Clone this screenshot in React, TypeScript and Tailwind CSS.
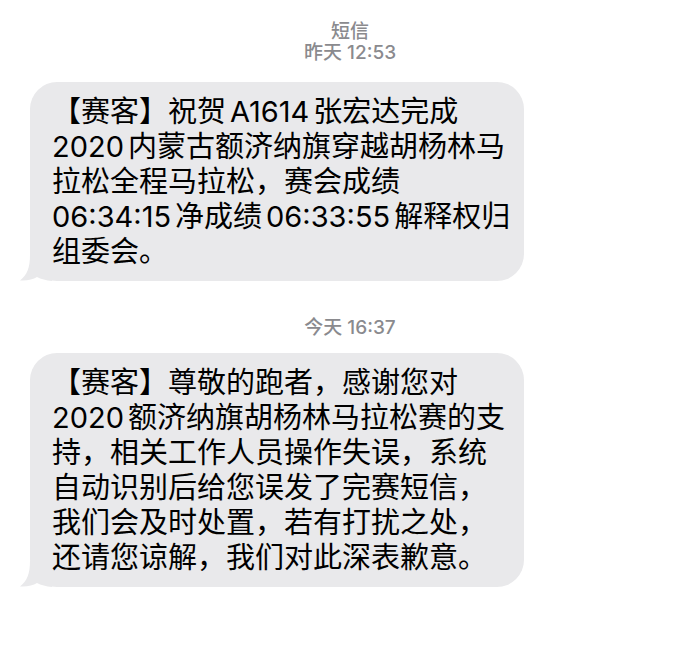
import React from "react";

const FONT = "font-['Inter','Noto_Sans_CJK_SC',sans-serif]";

const first = [
    "【赛客】祝贺 A1614 张宏达完成",
    "2020 内蒙古额济纳旗穿越胡杨林马",
    "拉松全程马拉松，赛会成绩",
    "06:34:15 净成绩 06:33:55 解释权归",
    "组委会。",
];

const second = [
    "【赛客】尊敬的跑者，感谢您对",
    "2020 额济纳旗胡杨林马拉松赛的支",
    "持，相关工作人员操作失误，系统",
    "自动识别后给您误发了完赛短信，",
    "我们会及时处置，若有打扰之处，",
    "还请您谅解，我们对此深表歉意。",
];

// iOS puts a narrow gap between latin and CJK runs
function Line({ text }: { text: string }) {
    const parts = text.split(" ");
    return (
        <div className="whitespace-nowrap">
            {parts.map((p, i) => (
                <React.Fragment key={i}>
                    {i > 0 && <span className="inline-block w-[4px]" />}
                    {p}
                </React.Fragment>
            ))}
        </div>
    );
}

function Bubble({ lines }: { lines: string[] }) {
    return (
        <div className="relative ml-[30px] w-[494px]">
            <div className="rounded-[27px] bg-[#e9e9eb] pl-[22px] pr-4 py-3 text-[29px] leading-[35px] text-black">
                {lines.map((l) => (
                    <Line key={l} text={l} />
                ))}
            </div>
            {/* tail */}
            <svg
                className="absolute left-[-10px] bottom-0"
                width="32"
                height="26"
                viewBox="0 0 32 26"
            >
                <path
                    d="M10 0 C10 13 7 20 0 25.5 C7 26 13 24.5 17 22 C21 24 26 25.5 32 26 L32 0 Z"
                    fill="#e9e9eb"
                />
            </svg>
        </div>
    );
}

function Stamp({ day, time }: { day: string; time: string }) {
    return (
        <div className="text-center text-[19px] leading-[21px] font-medium text-[#8a8a8e]">
            {day} {time}
        </div>
    );
}

export default function App() {
    return (
        <div className={`w-[700px] h-[668px] bg-white ${FONT}`}>
            <div className="pt-[21px]">
                <div className="text-center text-[19px] leading-[21px] font-medium text-[#8a8a8e]">短信</div>
                <Stamp day="昨天" time="12:53" />
            </div>

            <div className="mt-[19px]">
                <Bubble lines={first} />
            </div>

            <div className="mt-[36px]">
                <Stamp day="今天" time="16:37" />
            </div>

            <div className="mt-[15px]">
                <Bubble lines={second} />
            </div>
        </div>
    );
}
